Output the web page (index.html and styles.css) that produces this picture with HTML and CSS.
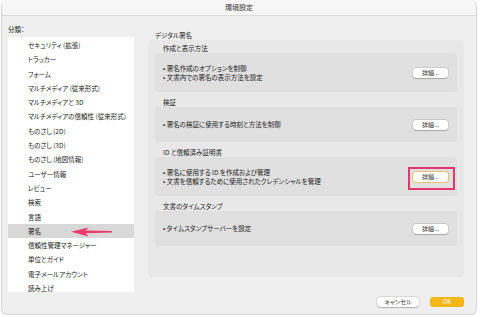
FILE: index.html
```html
<!DOCTYPE HTML>
<html lang="ja">

<head>
    <title>環境設定</title>
    <meta charset="utf-8">
    <meta name="viewport" content="width=device-width, initial-scale=1">
    <link rel="stylesheet" href="styles.css">
</head>

<body>
    <div class="window">
        <div class="titlebar">環境設定</div>

        <div class="main">
            <div class="sidebar">
                <div class="cat-label">分類：</div>
                <ul class="cat-list">
                    <li>セキュリティ (拡張)</li>
                    <li>トラッカー</li>
                    <li>フォーム</li>
                    <li>マルチメディア (従来形式)</li>
                    <li>マルチメディアと 3D</li>
                    <li>マルチメディアの信頼性 (従来形式)</li>
                    <li>ものさし (2D)</li>
                    <li>ものさし (3D)</li>
                    <li>ものさし (地図情報)</li>
                    <li>ユーザー情報</li>
                    <li>レビュー</li>
                    <li>検索</li>
                    <li>言語</li>
                    <li class="selected">署名</li>
                    <li>信頼性管理マネージャー</li>
                    <li>単位とガイド</li>
                    <li>電子メールアカウント</li>
                    <li>読み上げ</li>
                </ul>
                <!-- 注釈の矢印 -->
                <svg class="arrow" width="44" height="14" viewBox="0 0 44 14">
                    <path d="M1 6.8 L18.5 2.4 L15.8 5.6 L42 6.1 L42 7.6 L15.8 8.2 L18.5 11.6 Z" fill="#ea3a6f"/>
                </svg>
            </div>

            <div class="panel">
                <div class="panel-title">デジタル署名</div>
                <div class="group">
                    <section class="sub">
                        <div class="sub-title">作成と表示方法</div>
                        <div class="sub-box">
                            <ul class="bullets">
                                <li>署名作成のオプションを制御</li>
                                <li>文書内での署名の表示方法を設定</li>
                            </ul>
                            <button type="button" class="btn">詳細...</button>
                        </div>
                    </section>

                    <section class="sub">
                        <div class="sub-title">検証</div>
                        <div class="sub-box">
                            <ul class="bullets">
                                <li>署名の検証に使用する時刻と方法を制御</li>
                            </ul>
                            <button type="button" class="btn">詳細...</button>
                        </div>
                    </section>

                    <section class="sub">
                        <div class="sub-title">ID と信頼済み証明書</div>
                        <div class="sub-box">
                            <ul class="bullets">
                                <li>署名に使用する ID を作成および管理</li>
                                <li>文書を信頼するために使用されたクレデンシャルを管理</li>
                            </ul>
                            <div class="btn-wrap">
                                <button type="button" class="btn focused">詳細...</button>
                                <span class="mark"></span>
                            </div>
                        </div>
                    </section>

                    <section class="sub">
                        <div class="sub-title">文書のタイムスタンプ</div>
                        <div class="sub-box">
                            <ul class="bullets">
                                <li>タイムスタンプサーバーを設定</li>
                            </ul>
                            <button type="button" class="btn">詳細...</button>
                        </div>
                    </section>
                </div>
            </div>
        </div>

        <div class="footer">
            <button type="button" class="btn cancel">キャンセル</button>
            <button type="button" class="btn ok">OK</button>
        </div>
    </div>
</body>

</html>
```

FILE: styles.css
```css
* {
    box-sizing: border-box;
}

body {
    margin: 0;
    background: #fff;
    font-family: "Noto Sans CJK JP", "Noto Sans", sans-serif;
    font-feature-settings: "palt";
    color: #222;
}

.window {
    width: 476px;
    height: 315px;
    margin-left: 1px;
    background: #efefef;
    border: 1px solid #d6d6d6;
    border-top: none;
    border-radius: 6px;
    overflow: hidden;
    display: flex;
    flex-direction: column;
}

.titlebar {
    height: 16px;
    line-height: 15px;
    background: #f6f6f6;
    border-bottom: 1px solid #dcdcdc;
    text-align: center;
    font-size: 7px;
    color: #333;
}

.main {
    flex: 1;
    display: flex;
    gap: 14px;
    padding: 9px 12px 0 6px;
}

.sidebar {
    position: relative;
    width: 126px;
}

.cat-label {
    font-size: 6.5px;
    line-height: 8px;
    margin-bottom: 4px;
}

.cat-list {
    list-style: none;
    margin: 0;
    padding: 1px 0 0;
    height: 255px;
    overflow: hidden;
    background: #fff;
}

.cat-list li {
    height: 14.3px;
    line-height: 14.3px;
    padding-left: 20px;
    font-size: 6.5px;
    white-space: nowrap;
}

.cat-list li.selected {
    background: #d8d8d8;
}

.arrow {
    position: absolute;
    left: 62px;
    top: 200px;
}

.panel {
    flex: 1;
    padding-top: 6px;
}

.panel-title {
    font-size: 6.5px;
    line-height: 8px;
    padding-left: 7px;
    margin-bottom: 1px;
}

.group {
    background: #e8e8e8;
    border-radius: 4px;
    padding: 4px 7px 31px;
}

.sub + .sub {
    margin-top: 6px;
}

.sub-title {
    font-size: 6.5px;
    line-height: 8px;
    padding-left: 8px;
    margin-bottom: 1px;
}

.sub-box {
    background: #e0e0e0;
    border-radius: 4px;
    min-height: 35px;
    padding: 10.5px 9px 10.5px 8px;
    display: flex;
    align-items: center;
    justify-content: space-between;
}

.bullets {
    list-style: none;
    margin: 0;
    padding: 0;
}

.bullets li {
    font-size: 6.5px;
    line-height: 9px;
}

.bullets li::before {
    content: "• ";
}

.btn {
    font-family: inherit;
    font-feature-settings: "palt";
    font-size: 6px;
    line-height: 10px;
    height: 10px;
    width: 35px;
    padding: 0;
    border: none;
    border-radius: 3px;
    background: #fff;
    color: #333;
    box-shadow: 0 0 0 0.5px rgba(0, 0, 0, 0.15), 0 0.5px 1px rgba(0, 0, 0, 0.2);
}

.btn.focused {
    box-shadow: 0 0 0 1px #e6c36a;
}

.btn-wrap {
    position: relative;
    display: flex;
}

.mark {
    position: absolute;
    left: -5px;
    top: -5px;
    width: 47px;
    height: 23px;
    border: 2px solid #e8346e;
}

.footer {
    height: 23px;
    padding: 5px 12px 0 0;
    display: flex;
    justify-content: flex-end;
    gap: 11px;
}

.btn.cancel {
    width: 42px;
}

.btn.ok {
    width: 34px;
    background: #f2b619;
    color: #fff;
    box-shadow: none;
}
```
